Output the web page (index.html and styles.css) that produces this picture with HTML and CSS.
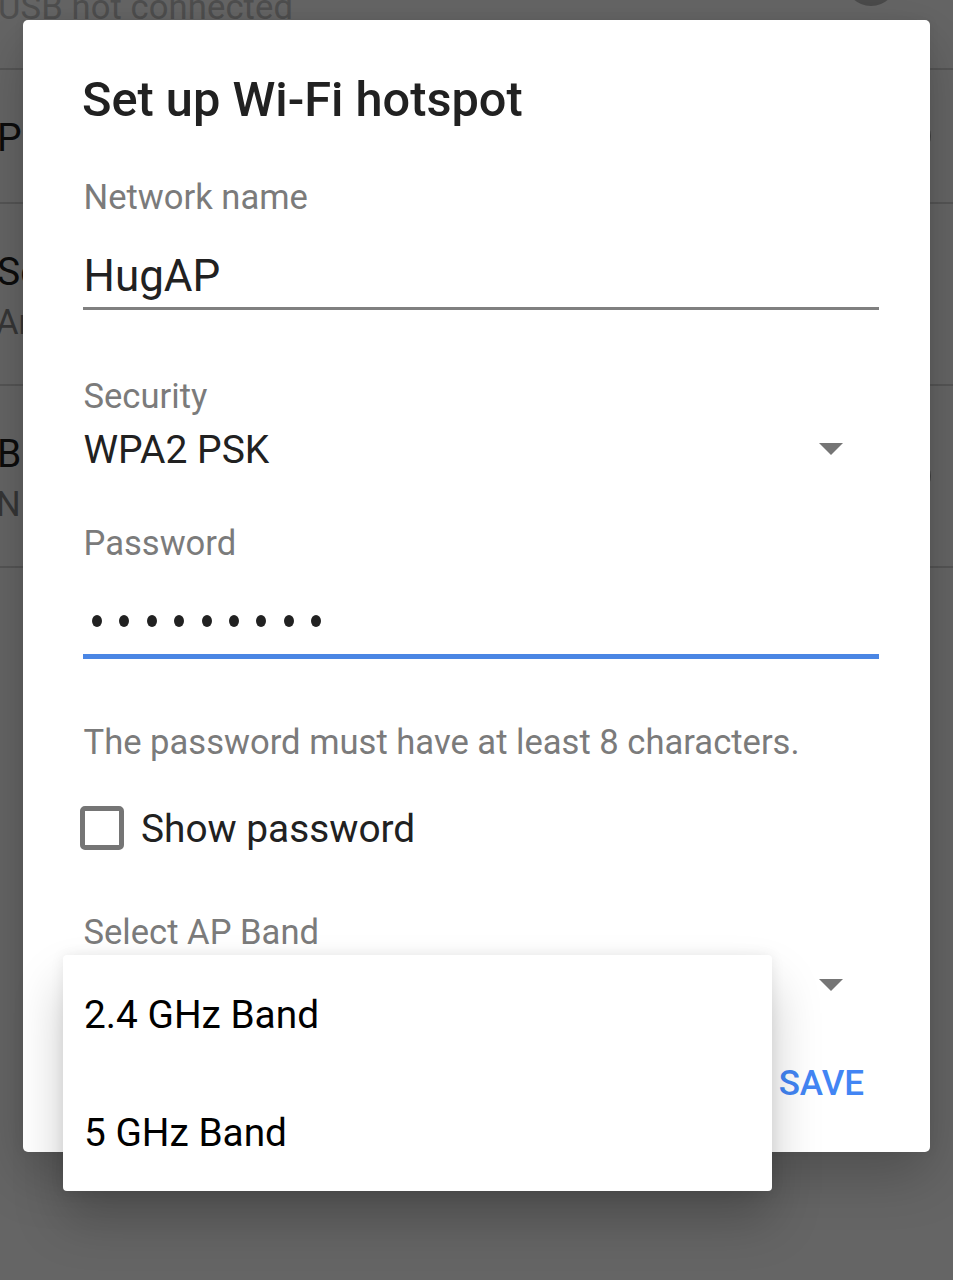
FILE: index.html
```html
<!DOCTYPE html>
<html lang="en">
<head>
<meta charset="utf-8">
<title>Set up Wi-Fi hotspot</title>
<link rel="stylesheet" href="styles.css">
</head>
<body>
<div class="screen">
  <div class="settings">
    <div class="row row-usb"><span class="sub usb">USB not connected</span><i class="thumb"></i></div>
    <div class="row row-single"><span class="main">P</span><i class="track"></i></div>
    <div class="row row-double"><span class="main">Se</span><span class="sub">An</span></div>
    <div class="row row-double"><span class="main">B</span><span class="sub">N</span><i class="track"></i></div>
  </div>

  <main class="dialog">
    <h1 class="title">Set up Wi-Fi hotspot</h1>
    <div class="label label-name">Network name</div>
    <div class="field field-name">HugAP</div>
    <div class="label label-security">Security</div>
    <div class="spinner spinner-security">
      <span class="spinner-value">WPA2 PSK</span>
      <svg class="arrow" viewBox="0 0 24 12"><path d="M0 0H24L12 12Z"/></svg>
    </div>
    <div class="label label-password">Password</div>
    <div class="field-password">
      <i class="dot"></i><i class="dot"></i><i class="dot"></i><i class="dot"></i><i class="dot"></i><i class="dot"></i><i class="dot"></i><i class="dot"></i><i class="dot"></i>
    </div>
    <div class="label hint">The password must have at least 8 characters.</div>
    <div class="check"><span class="box"></span><span class="check-text">Show password</span></div>
    <div class="label label-band">Select AP Band</div>
    <div class="spinner spinner-band">
      <svg class="arrow" viewBox="0 0 24 12"><path d="M0 0H24L12 12Z"/></svg>
    </div>
    <div class="actions"><span class="save">SAVE</span></div>
  </main>

  <div class="menu">
    <div class="option">2.4 GHz Band</div>
    <div class="option">5 GHz Band</div>
  </div>
</div>
</body>
</html>
```
FILE: styles.css
```css
* { box-sizing: border-box; }
body { margin: 0; font-family: Roboto, "Liberation Sans", sans-serif; }
.screen {
  position: relative;
  width: 953px;
  height: 1280px;
  padding: 20px 23px 0;
  overflow: hidden;
  background: #656565;
  white-space: nowrap;
}

/* Dimmed settings list behind the dialog */
.settings { position: absolute; inset: 0; }
.row {
  position: relative;
  display: flex;
  flex-direction: column;
  border-bottom: 2px solid #555;
}
.row-usb { height: 70px; }
.row-single { height: 134px; padding-top: 46px; }
.row-double { height: 182px; padding-top: 46px; }
.main { font-size: 39px; line-height: 44px; margin-left: -3px; color: #0c0c0c; }
.sub { font-size: 34.6px; line-height: 40px; margin: 8px 0 0 -4px; color: #363636; }
.usb { margin: -13px 0 0 -2px; color: #4e4e4e; letter-spacing: 0.1px; }
.thumb {
  position: absolute; left: 845px; top: -46px;
  width: 52px; height: 52px; border-radius: 50%; background: #4a4a4a;
}
.track {
  position: absolute; left: 860px; top: 48px;
  width: 71px; height: 36px; border-radius: 18px; background: #444;
}
.row-double .track { top: 72px; }

/* Dialog */
.dialog {
  position: relative;
  width: 907px;
  height: 1132px;
  padding: 52px 51px 0 60px;
  border-radius: 5px;
  background: #fff;
  color: #212121;
  box-shadow: 0 22px 56px rgba(0, 0, 0, 0.22), 0 0 12px rgba(0, 0, 0, 0.05);
}
.title { margin: 0 0 0 -1px; font-size: 48.7px; font-weight: 500; line-height: 56px; }
.label { padding-left: 0.5px; font-size: 34.6px; line-height: 40px; color: #7b7b7b; }
.label-name { margin-top: 49px; }
.field-name {
  height: 59px;
  margin-top: 34px;
  border-bottom: 3px solid #808080;
  padding-left: 0.5px;
  font-size: 44px;
  line-height: 50px;
}
.label-security { margin-top: 66px; }
.spinner {
  display: flex;
  align-items: center;
  height: 46px;
  padding-right: 36px;
  font-size: 39px;
}
.spinner-value { padding-left: 0.5px; }
.spinner-security { margin-top: 11px; }
.spinner-security .arrow { margin-top: -2px; }
.spinner-band { margin-top: 10px; }
.arrow { width: 24px; height: 12px; margin-left: auto; fill: #757575; }
.label-password { margin-top: 50px; }
.field-password {
  display: flex;
  gap: 17.4px;
  height: 96px;
  padding: 52px 0 0 9px;
  border-bottom: 5px solid #4a86e4;
}
.dot { width: 10px; height: 12px; border-radius: 50%; background: #212121; }
.hint { margin-top: 63px; }
.check { display: flex; align-items: center; gap: 17px; height: 44px; margin: 44px 0 0 -3px; }
.box { width: 44px; height: 44px; border: 5px solid #757575; border-radius: 5px; }
.check-text { padding-top: 2px; font-size: 38.8px; line-height: 44px; }
.label-band { margin-top: 62px; }
.actions { display: flex; justify-content: flex-end; margin-top: 56px; padding-right: 15px; }
.save { font-size: 35px; font-weight: 500; line-height: 40px; color: #4285f4; }

/* Band dropdown */
.menu {
  position: absolute;
  left: 63px;
  top: 955px;
  width: 709px;
  height: 236px;
  padding-top: 1px;
  border-radius: 4px;
  background: #fff;
  color: #000;
  box-shadow: 0 30px 50px rgba(0, 0, 0, 0.21), 0 0 14px rgba(0, 0, 0, 0.08);
}
.option { padding-left: 21px; font-size: 38.8px; line-height: 118px; }
```
